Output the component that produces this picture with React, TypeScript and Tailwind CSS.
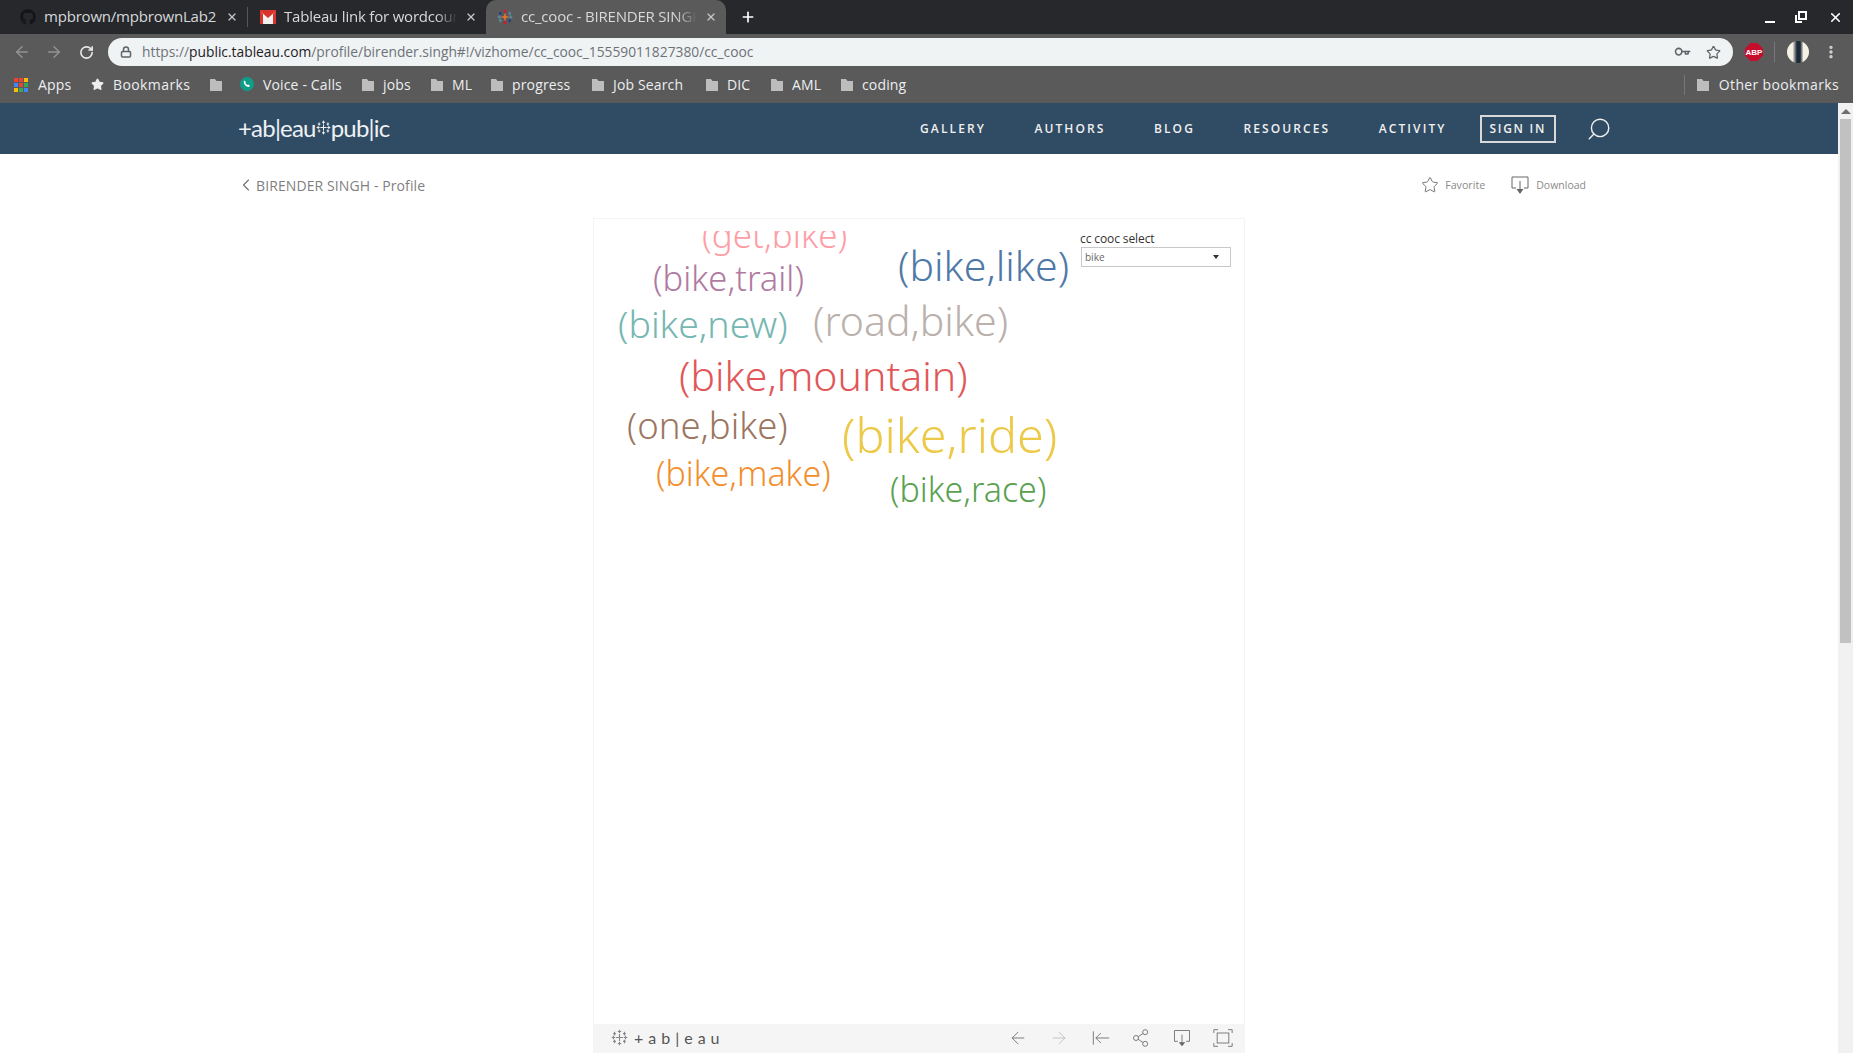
import { ArrowLeft, ArrowRight, ChevronLeft, Key, Lock, MoreVertical, Plus, RotateCw, Search, Star, X } from 'lucide-react'
import { FaGithub } from 'react-icons/fa'

const BOOKMARKS = [
  { label: 'jobs', w: 'w-[47px]' },
  { label: 'ML', w: 'w-[38px]' },
  { label: 'progress', w: 'w-[79px]' },
  { label: 'Job Search', w: 'w-[92px]' },
  { label: 'DIC', w: 'w-[43px]' },
  { label: 'AML', w: 'w-[48px]' },
  { label: 'coding', w: 'w-[62px]' },
]

const NAV = ['GALLERY', 'AUTHORS', 'BLOG', 'RESOURCES', 'ACTIVITY']

const WORDS = [
  { t: '(get,bike)', c: 'left-[108px] top-[-14px] text-[35px] text-[#ff9da7]' },
  { t: '(bike,trail)', c: 'left-[59px] top-[30px] text-[34.500px] text-[#b07aa1]' },
  { t: '(bike,like)', c: 'left-[304px] top-[14px] text-[41px] text-[#4e79a7]' },
  { t: '(bike,new)', c: 'left-[24px] top-[74px] text-[37.500px] text-[#76b7b2]' },
  { t: '(road,bike)', c: 'left-[219px] top-[69px] text-[41px] text-[#bab0ac]' },
  { t: '(bike,mountain)', c: 'left-[85px] top-[124px] text-[41px] text-[#e15759]' },
  { t: '(one,bike)', c: 'left-[33px] top-[176px] text-[36.500px] text-[#9c755f]' },
  { t: '(bike,ride)', c: 'left-[248px] top-[179px] text-[48.500px] text-[#edc948]' },
  { t: '(bike,make)', c: 'left-[62px] top-[225px] text-[34px] text-[#f28e2b]' },
  { t: '(bike,race)', c: 'left-[296px] top-[241px] text-[34px] text-[#59a14f]' },
]

function Folder() {
  return (
    <svg width="14" height="14" viewBox="0 0 14 14" className="flex-none">
      <path d="M1 1h5l1.500 2H13V13H1z" fill="#bdbdbd" />
    </svg>
  )
}

function Sparkle({ size, color }: { size: number; color: string }) {
  return (
    <svg width={size} height={size} viewBox="0 0 24 24" stroke={color} strokeWidth="1.6" className="flex-none">
      <path d="M12 7v10M7 12h10M12 1v5M9.500 3.500h5M12 18v5M9.500 20.500h5M1 12h5M3.500 9.500v5M18 12h5M20.500 9.500v5M5 4v5M3 6.500h4M19 4v5M17 6.500h4M5 15v5M3 17.500h4M19 15v5M17 17.500h4" />
    </svg>
  )
}

function TabloFavicon() {
  return (
    <svg width="16" height="16" viewBox="0 0 24 24" strokeWidth="2.400" className="flex-none">
      <path d="M12 7v10M7 12h10" stroke="#e8762b" />
      <path d="M12 1v5M9.500 3.500h5M12 18v5M9.500 20.500h5" stroke="#c72035" />
      <path d="M1 12h5M3.500 9.500v5M18 12h5M20.500 9.500v5" stroke="#5b879b" />
      <path d="M5 4v5M3 6.500h4M19 15v5M17 17.500h4" stroke="#1f447e" />
      <path d="M19 4v5M17 6.500h4M5 15v5M3 17.500h4" stroke="#59879b" />
    </svg>
  )
}

function Tab({ label, icon, active, fade, w, pl }: { label: string; icon: React.ReactNode; active?: boolean; fade?: boolean; w: string; pl: string }) {
  return (
    <div className={`flex h-full flex-none items-center gap-[8px] pr-[9px] ${pl} ${w} ${active ? 'rounded-t-[10px] bg-[#5a5a5a]' : ''}`}>
      {icon}
      <span
        className={`mb-[2px] min-w-0 flex-1 overflow-hidden whitespace-nowrap text-[15px] tracking-[-0.2px] text-[#d6d8da] ${
          fade ? '[mask-image:linear-gradient(90deg,#000_88%,transparent)]' : ''
        }`}
      >
        {label}
      </span>
      <X size={12} strokeWidth={2.500} className="flex-none text-[#c8c8c8]" />
    </div>
  )
}

export default function App() {
  return (
    <div className="flex h-[1053px] w-[1853px] flex-col overflow-hidden bg-white font-['Open_Sans',sans-serif]">
      {/* tabs */}
      <div className="flex h-[34px] flex-none items-end bg-[#27282c]">
        <div className="flex h-[34px] items-center">
          <Tab w="w-[247px]" pl="pl-[20px]" label="mpbrown/mpbrownLab2" icon={<FaGithub size={16} className="flex-none text-[#141517]" />} />
          <span className="h-[20px] w-px bg-[#55565a]" />
          <Tab
            w="w-[238px]"
            pl="pl-[12px]"
            fade
            label="Tableau link for wordcount"
            icon={
              <svg width="16" height="14" viewBox="0 0 16 14" className="flex-none">
                <rect width="16" height="14" rx="1" fill="#f2f2f2" />
                <path d="M0 1l8 7 8-7v-1H0zM0 1v13h3V4zM16 1v13h-3V4z" fill="#d9342b" />
              </svg>
            }
          />
          <Tab w="w-[240px]" pl="pl-[11px]" active fade label="cc_cooc - BIRENDER SINGH" icon={<TabloFavicon />} />
        </div>
        <div className="flex h-[34px] items-center pl-[14px]">
          <Plus size={16} strokeWidth={2.500} className="text-white" />
        </div>
        <div className="ml-auto flex h-[34px] items-center gap-[20px] pr-[10px] text-white">
          <span className="mt-[10px] h-[2px] w-[10px] bg-white" />
          <svg width="12" height="12" viewBox="0 0 12 12" fill="none" stroke="white" strokeWidth="2">
            <path d="M4 1h7v7H4zM1 4v7h6" />
          </svg>
          <X size={15} strokeWidth={2.500} className="ml-[1px]" />
        </div>
      </div>

      {/* toolbar */}
      <div className="flex h-[32px] flex-none items-end bg-[#5a5a5a]">
        <div className="flex h-[28px] w-[108px] flex-none items-center gap-[14px] pl-[13px]">
          <ArrowLeft size={18} className="text-[#929292]" />
          <ArrowRight size={18} className="text-[#929292]" />
          <RotateCw size={15} strokeWidth={2.600} className="ml-[2px] text-[#e8e8e8]" />
        </div>
        <div className="flex h-[28px] w-[1625px] flex-none items-center rounded-full bg-[#f0f3f4] pl-[12px] pr-[12px]">
          <Lock size={12} strokeWidth={3} className="text-[#5f6368]" />
          <span className="ml-[10px] whitespace-nowrap text-[13.800px] text-[#6d7278]">
            https://<span className="text-[#1f2124]">public.tableau.com</span>/profile/birender.singh#!/vizhome/cc_cooc_15559011827380/cc_cooc
          </span>
          <Key size={14} strokeWidth={2.600} className="ml-auto rotate-[45deg] text-[#5f6368]" />
          <Star size={15} strokeWidth={2} className="ml-[17px] text-[#5f6368]" />
        </div>
        <div className="flex h-[28px] flex-1 items-center pl-[12px]">
          <svg width="18" height="18" viewBox="0 0 18 18" className="flex-none">
            <path d="M5.500 0h7L18 5.500v7L12.500 18h-7L0 12.500v-7z" fill="#c70d2c" />
            <text x="9" y="12" textAnchor="middle" fontSize="8" fontWeight="700" fill="white" fontFamily="Liberation Sans, sans-serif">ABP</text>
          </svg>
          <span className="ml-[11px] h-[20px] w-px bg-[#777]" />
          <span className="ml-[12px] h-[22px] w-[22px] flex-none rounded-full bg-[linear-gradient(90deg,#f4f2e4_25%,#1f2a38_45%,#1f2a38_60%,#f4f2e4_75%)]" />
          <MoreVertical size={16} strokeWidth={3} className="ml-[14px] text-[#d8d8d8]" />
        </div>
      </div>

      {/* bookmarks */}
      <div className="flex h-[37px] flex-none items-center bg-[#5a5a5a] pl-[14px] pr-[14px] text-[14px] tracking-[0.15px] text-[#eceef0]">
        <svg width="14" height="14" viewBox="0 0 14 14" className="flex-none">
          <path d="M0 0h4v4H0z" fill="#ea4335" />
          <path d="M5 0h4v4H5z" fill="#ea4335" />
          <path d="M10 0h4v4h-4z" fill="#fbbc05" />
          <path d="M0 5h4v4H0z" fill="#4285f4" />
          <path d="M5 5h4v4H5z" fill="#ea4335" />
          <path d="M10 5h4v4h-4z" fill="#34a853" />
          <path d="M0 10h4v4H0z" fill="#fbbc05" />
          <path d="M5 10h4v4H5z" fill="#34a853" />
          <path d="M10 10h4v4h-4z" fill="#4285f4" />
        </svg>
        <span className="ml-[10px] w-[53px] flex-none">Apps</span>
        <Star size={13} fill="#eceef0" className="flex-none" />
        <span className="ml-[9px] w-[96px] flex-none tracking-[0.4px]">Bookmarks</span>
        <Folder />
        <svg width="16" height="16" viewBox="0 0 16 16" className="ml-[16px] flex-none">
          <circle cx="8" cy="7" r="7" fill="#0f9d8a" />
          <path d="M5 4c1-1 2 1 1.500 2 .5 1 1.500 2 2.500 2 1-.5 2.500.5 1.500 1.500-2 2-7-3-5.500-5.500z" fill="white" />
        </svg>
        <span className="ml-[8px] w-[98px] flex-none">Voice - Calls</span>
        {BOOKMARKS.map((b) => (
          <div key={b.label} className="flex flex-none items-center">
            <Folder />
            <span className={`ml-[8px] flex-none ${b.w}`}>{b.label}</span>
          </div>
        ))}
        <span className="ml-auto h-[20px] w-px bg-[#777]" />
        <span className="ml-[11px]">
          <Folder />
        </span>
        <span className="ml-[9px] tracking-[0.35px]">Other bookmarks</span>
      </div>

      <div className="flex min-h-0 flex-1">
        <div className="flex min-w-0 flex-1 flex-col">
          {/* site nav */}
          <div className="flex h-[51px] flex-none items-center bg-[#304c64] pl-[238px] text-white">
            <div className="mb-[2px] flex items-center font-['Lato',sans-serif] text-[24px] leading-none tracking-[-0.8px] text-[#eef1f4]">
              <span>+ab|eau</span>
              <Sparkle size={15} color="#eef1f4" />
              <span>pub|ic</span>
            </div>
            <div className="ml-auto flex items-center text-[12px] font-semibold tracking-[2.100px] text-[#f0f0f0]">
              {NAV.map((n) => (
                <span key={n} className="mr-[48.500px]">
                  {n}
                </span>
              ))}
              <span className="-ml-[15.500px] border-2 border-[#d9d9d9] px-[8px] py-[3px] tracking-[1.700px]">SIGN IN</span>
              <Search size={26} strokeWidth={1.300} className="ml-[30px] mr-[226px] -scale-x-100" />
            </div>
          </div>

          {/* breadcrumb row */}
          <div className="flex h-[64px] flex-none items-center pb-[2px] pl-[236px] pr-[252px]">
            <ChevronLeft size={20} strokeWidth={1.300} className="text-[#6f6f6f]" />
            <span className="text-[14px] tracking-[0.1px] text-[#7f7f7f]">BIRENDER SINGH - Profile</span>
            <Star size={18} strokeWidth={1.200} className="ml-auto text-[#666]" />
            <span className="ml-[6px] text-[10.700px] text-[#8a8a8a]">Favorite</span>
            <svg width="18" height="20" viewBox="0 0 18 20" fill="none" stroke="#666" className="ml-[26px]">
              <path d="M5 13H1V2h16v11h-4" />
              <path d="M9 6v10" />
              <path d="M5.500 14h7L9 19z" fill="#666" stroke="none" />
            </svg>
            <span className="ml-[7px] mt-[1px] text-[10.500px] text-[#8a8a8a]">Download</span>
          </div>

          {/* viz frame */}
          <div className="flex min-h-0 flex-1 pl-[593px]">
            <div className="flex w-[652px] flex-col border-x border-t border-[#f4f4f4]">
              <div className="relative flex-1 overflow-hidden">
                <div className="absolute inset-x-0 top-[12px] h-[300px] overflow-hidden font-['Noto_Sans',sans-serif]">
                  {WORDS.map((w) => (
                    <span key={w.t} className={`absolute whitespace-nowrap font-light leading-none ${w.c}`}>
                      {w.t}
                    </span>
                  ))}
                </div>
                <div className="absolute left-[486px] top-[13px] w-[151px]">
                  <div className="text-[12px] font-medium leading-[14px] tracking-[-0.1px] text-[#333]">cc cooc select</div>
                  <div className="ml-px mt-[1px] flex h-[20px] items-center justify-between border border-[#c8c8c8] pl-[3px] pr-[11px] text-[10px] text-[#666]">
                    bike
                    <span className="h-0 w-0 border-x-[3px] border-t-[4px] border-x-transparent border-t-[#333]" />
                  </div>
                </div>
              </div>
              <div className="flex h-[29px] flex-none items-center bg-[#f5f5f5] pb-[2px] pl-[17px] pr-[11px] text-[#666]">
                <Sparkle size={17} color="#888" />
                <span className="ml-[6px] font-['Lato',sans-serif] text-[16px] tracking-[5px] text-[#555]">+ab|eau</span>
                <div className="ml-auto flex items-center gap-[21px]">
                  <ArrowLeft size={20} strokeWidth={1} />
                  <ArrowRight size={20} strokeWidth={1} className="text-[#bbb]" />
                  <svg width="20" height="20" viewBox="0 0 24 24" fill="none" stroke="currentColor">
                    <path d="M4 4v16M23 12H7M13 6l-6 6 6 6" />
                  </svg>
                  <svg width="20" height="20" viewBox="0 0 24 24" fill="none" stroke="currentColor">
                    <circle cx="6" cy="12" r="3" />
                    <circle cx="17" cy="5" r="3" />
                    <circle cx="17" cy="19" r="3" />
                    <path d="M8.500 10.500l6-4M8.500 13.500l6 4" />
                  </svg>
                  <svg width="20" height="20" viewBox="0 0 24 24" fill="none" stroke="currentColor">
                    <path d="M7 16H3V3h18v13h-4M12 8v10" />
                    <path d="M8 17h8l-4 5z" fill="currentColor" stroke="none" />
                  </svg>
                  <svg width="20" height="20" viewBox="0 0 24 24" fill="none" stroke="currentColor">
                    <rect x="5" y="6" width="14" height="12" />
                    <path d="M1 6V2h5M18 2h5v4M23 18v4h-5M6 22H1v-4" />
                  </svg>
                </div>
              </div>
            </div>
          </div>
        </div>

        {/* scrollbar */}
        <div className="flex w-[15px] flex-none flex-col items-center bg-[#f1f1f1] pt-[6px]">
          <span className="h-0 w-0 border-x-[5px] border-b-[5px] border-x-transparent border-b-[#6e6e6e]" />
          <span className="mt-[5px] h-[524px] w-[11px] bg-[#c1c1c1]" />
        </div>
      </div>
    </div>
  )
}
